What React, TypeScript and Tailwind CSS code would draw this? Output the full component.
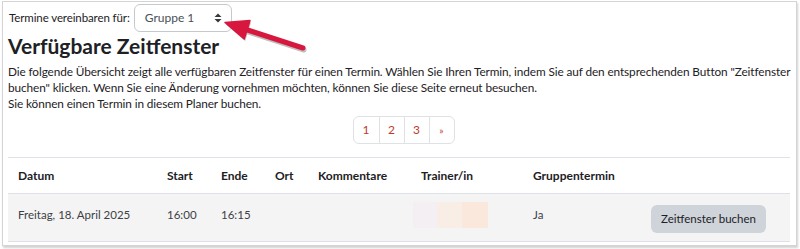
const cols = [
  { label: 'Datum', w: 'w-[149px]' },
  { label: 'Start', w: 'w-[54px]' },
  { label: 'Ende', w: 'w-[54px]' },
  { label: 'Ort', w: 'w-[43px]' },
  { label: 'Kommentare', w: 'w-[103px]' },
  { label: 'Trainer/in', w: 'w-[112px]' },
  { label: 'Gruppentermin', w: 'w-[118px]' },
  { label: '', w: 'w-[149px]' },
];

const SelectCaret = () => (
  <svg width="8" height="10" viewBox="0 0 8 10" aria-hidden="true">
    <path d="M4 0.5 L7.5 4 H0.5 Z M4 9.5 L7.5 6 H0.5 Z" fill="#343a40" />
  </svg>
);

const Arrow = () => (
  <svg
    className="absolute left-0 top-0 pointer-events-none"
    width="320"
    height="60"
    viewBox="0 0 320 60"
    aria-hidden="true"
  >
    <g opacity="0.25" transform="translate(1 2)">
      <line x1="300" y1="46" x2="240" y2="26.5" stroke="#000" strokeWidth="5" strokeLinecap="round" />
      <path d="M222 20.5 L247 18.6 L241.2 37 Z" fill="#000" />
    </g>
    <line x1="300" y1="46" x2="240" y2="26.5" stroke="#d8173f" strokeWidth="5" strokeLinecap="round" />
    <path d="M222 20.5 L247 18.6 L241.2 37 Z" fill="#d8173f" strokeLinejoin="round" stroke="#d8173f" strokeWidth="1.5" />
  </svg>
);

export default function App() {
  return (
    <div className="w-[800px] h-[249px] bg-white pt-px pl-[2px] overflow-hidden font-['Lato','Noto_Sans',sans-serif] text-[#1d2125]">
      <div className="relative w-[795px] h-[245px] border border-[#d4d4d4] shadow-[1px_2px_2px_rgba(0,0,0,0.18)] px-[5px] pt-[2px]">
        <div className="flex items-center gap-[4px] pl-px">
          <span className="text-[11.5px] tracking-[-0.1px]">Termine vereinbaren für:</span>
          <div className="flex items-center justify-between w-[98px] h-[28px] border border-[#c5c9ce] rounded-[6px] pl-[10px] pr-[9px] text-[12px] text-[#495057]">
            <span>Gruppe 1</span>
            <SelectCaret />
          </div>
        </div>

        <h2 className="mt-[1px] text-[21px] leading-[25px] font-bold">Verfügbare Zeitfenster</h2>

        <div className="mt-[6px] text-[11.8px] tracking-[-0.1px] leading-[16px] whitespace-nowrap">
          <p>
            Die folgende Übersicht zeigt alle verfügbaren Zeitfenster für einen Termin. Wählen Sie Ihren Termin, indem Sie auf den entsprechenden Button "Zeitfenster
            <br />
            buchen" klicken. Wenn Sie eine Änderung vornehmen möchten, können Sie diese Seite erneut besuchen.
          </p>
          <p>Sie können einen Termin in diesem Planer buchen.</p>
        </div>

        <nav className="mt-[4px] flex justify-center pl-[8px]">
          <ul className="flex border border-[#dee2e6] rounded-[6px] text-[12px] text-[#c0392b]">
            <li className="w-[25px] h-[26px] flex items-center justify-center">1</li>
            <li className="w-[25px] h-[26px] flex items-center justify-center border-l border-[#dee2e6]">2</li>
            <li className="w-[25px] h-[26px] flex items-center justify-center border-l border-[#dee2e6]">3</li>
            <li className="w-[25px] h-[26px] flex items-center justify-center border-l border-[#dee2e6] text-[10px]">»</li>
          </ul>
        </nav>

        <table className="mt-[13px] w-[782px] table-fixed border-collapse text-[12px]">
          <thead>
            <tr className="h-[36px] border-t border-b border-[#dee2e6]">
              {cols.map((c) => (
                <th key={c.label || 'action'} className={`${c.w} px-[10px] text-left font-bold`}>
                  {c.label}
                </th>
              ))}
            </tr>
          </thead>
          <tbody>
            <tr className="h-[48px] bg-[#f4f4f4] border-b border-[#dee2e6] text-[11.5px] text-[#3d4145] align-top">
              <td className="px-[10px] pt-[12px]">Freitag, 18. April 2025</td>
              <td className="px-[10px] pt-[12px]">16:00</td>
              <td className="px-[10px] pt-[12px]">16:15</td>
              <td className="px-[10px] pt-[12px]"></td>
              <td className="px-[10px] pt-[12px]"></td>
              <td className="pl-[2px] pt-[8px]">
                <div className="flex w-[75px] h-[26px]">
                  <div className="w-[24px] bg-[#f4eff3]" />
                  <div className="w-[25px] bg-[#f8eee6]" />
                  <div className="w-[26px] bg-[#fae8dd]" />
                </div>
              </td>
              <td className="px-[10px] pt-[12px]">Ja</td>
              <td className="px-[10px] pt-[11px]">
                <button className="w-[115px] h-[28px] rounded-[6px] bg-[#ced4da] text-[11.5px] text-[#1d2125]">
                  Zeitfenster buchen
                </button>
              </td>
            </tr>
          </tbody>
        </table>

        <Arrow />
      </div>
    </div>
  );
}
